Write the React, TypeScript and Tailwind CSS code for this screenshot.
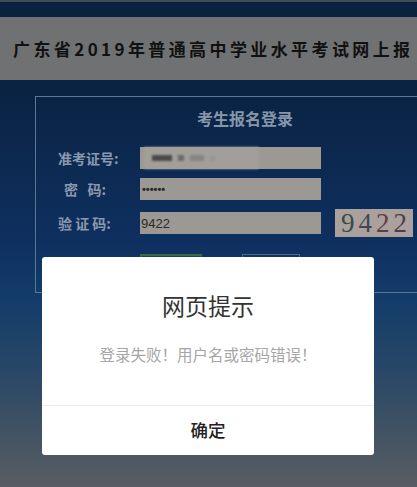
import React from "react";

const cjk = { fontFamily: '"Noto Sans CJK SC", "Noto Sans", sans-serif' };

function Field({ label, children }: { label: React.ReactNode; children: React.ReactNode }) {
  return (
    <div className="flex h-[22px] items-center">
      <div className="w-[104px] pl-[22px] text-[14px] font-bold text-[#8a99ad]">{label}</div>
      <div className="h-[22px] w-[181px] bg-[#9c9893]">{children}</div>
    </div>
  );
}

export default function App() {
  return (
    <div className="relative h-[487px] w-[417px] overflow-hidden bg-[#0a2241]" style={cjk}>
      {/* page under the modal, already dimmed */}
      <div className="h-[2px] bg-[#3f4b55]" />
      <div className="h-[15px] bg-[#0a2240]" />
      <div className="flex h-[63px] items-center overflow-hidden whitespace-nowrap bg-[#707172] pl-[13px]">
        <h1 className="text-[17px] font-bold tracking-[3.4px] text-[#111]">
          广东省2019年普通高中学业水平考试网上报
        </h1>
      </div>

      <div className="h-[407px] bg-[linear-gradient(180deg,#0a2241_0%,#0e3060_40%,#143d6b_55%,#2e4a66_75%,#595d62_100%)] pt-[16px]">
        <div className="ml-[35px] h-[197px] w-[420px] border border-[#5a7794]">
          <h2 className="pt-[10px] text-center text-[16px] font-bold leading-[22px] text-[#8797ab]">
            考生报名登录
          </h2>

          <div className="mt-[18px] flex flex-col gap-[9px]">
            <Field label="准考证号:">
              <div className="ml-[4px] flex h-full w-[115px] items-center gap-[6px] bg-[#a29e99] pl-[8px] blur-[1px]">
                <span className="h-[6px] w-[20px] bg-[#4a4a4c]" />
                <span className="h-[6px] w-[6px] bg-[#6a6a6a]" />
                <span className="h-[6px] w-[14px] bg-[#858585]" />
                <span className="h-[5px] w-[5px] bg-[#959595]" />
              </div>
            </Field>
            <Field label={<span className="pl-[6px]">密&nbsp;&nbsp;&nbsp;码:</span>}>
              <div
                className="flex h-full items-center pl-[2px] text-[11px] font-bold leading-none text-[#2a2a2a]"
                style={{ fontFamily: '"Liberation Sans", Arial, sans-serif' }}
              >
                ••••••
              </div>
            </Field>
            <div className="flex items-center">
              <Field label="验 证 码:">
                <div
                  className="flex h-full items-center pl-[1px] text-[13px] leading-none text-[#2b2b2b]"
                  style={{ fontFamily: '"Liberation Sans", Arial, sans-serif' }}
                >
                  9422
                </div>
              </Field>
              <div
                className="ml-[14px] flex h-[28px] w-[78px] items-center justify-center gap-[4px] bg-[#aaa19d] text-[27px] leading-none text-[#3a4a4a]"
                style={{ fontFamily: '"Liberation Serif", "Times New Roman", serif' }}
              >
                <span>9</span>
                <span className="text-[#3e4850]">4</span>
                <span className="text-[#5a3e46]">2</span>
                <span className="text-[#4e3e4c]">2</span>
              </div>
            </div>
          </div>

          <div className="mt-[17px] flex gap-[40px] pl-[104px]">
            <div className="h-[10px] w-[62px] border-x border-t-2 border-[#3b6b4a] bg-[#1a4a50]" />
            <div className="h-[10px] w-[58px] border-x border-t border-[#4d6a88]" />
          </div>
        </div>
      </div>

      {/* alert dialog */}
      <div className="absolute left-[42px] top-[257px] flex h-[198px] w-[332px] flex-col rounded-[3px] bg-white">
        <div className="flex h-[148px] flex-col items-center">
          <div className="mt-[32px] text-[23px] leading-[32px] text-[#333]">网页提示</div>
          <div className="mt-[22px] text-[15.5px] leading-[22px] text-[#a5a5a5]">登录失败！用户名或密码错误！</div>
        </div>
        <div className="h-px bg-[#ececec]" />
        <div className="flex flex-1 items-center justify-center text-[17.5px] font-medium text-[#222]">确定</div>
      </div>
    </div>
  );
}
